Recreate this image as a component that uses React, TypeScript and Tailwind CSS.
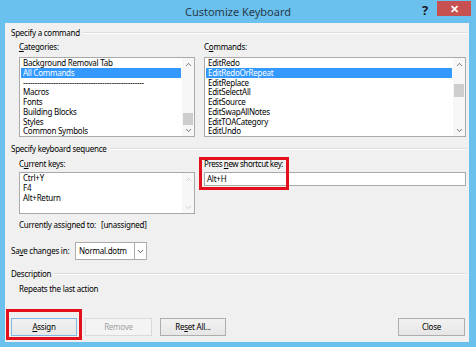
import React from "react";
import { ChevronDown, ChevronUp } from "lucide-react";

const categories = [
  "Background Removal Tab",
  "All Commands",
  "----------------------------------------------------",
  "Macros",
  "Fonts",
  "Building Blocks",
  "Styles",
  "Common Symbols",
];

const commands = [
  "EditRedo",
  "EditRedoOrRepeat",
  "EditReplace",
  "EditSelectAll",
  "EditSource",
  "EditSwapAllNotes",
  "EditTOACategory",
  "EditUndo",
];

function Heading({ children }: { children: React.ReactNode }) {
  return (
    <div className="flex items-center gap-[3px] h-[10px] leading-[10px]">
      <span className="whitespace-nowrap">{children}</span>
      <div className="flex-1 border-t border-[#dcdcdc] border-b-white border-b" />
    </div>
  );
}

function ScrollBar({ thumb, disabled }: { thumb?: string; disabled?: boolean }) {
  const arrow = disabled ? "#c4c4c4" : "#5a5a5a";
  return (
    <div className="w-[12px] flex flex-col items-center bg-[#f7f7f7]">
      <div className="h-[12px] flex items-center justify-center">
        <ChevronUp size={9} strokeWidth={2.2} color={arrow} />
      </div>
      <div className="flex-1 w-full relative">
        {thumb && <div className={"absolute left-[1px] right-[1px] bg-[#cdcdcd] " + thumb} />}
      </div>
      <div className="h-[12px] flex items-center justify-center">
        <ChevronDown size={9} strokeWidth={2.2} color={arrow} />
      </div>
    </div>
  );
}

function ListBox({
  items,
  selected,
  width,
  height,
  thumb,
  disabled,
}: {
  items: string[];
  selected?: number;
  width: string;
  height: string;
  thumb?: string;
  disabled?: boolean;
}) {
  return (
    <div className={"flex border border-[#a9a9a9] bg-white " + width + " " + height}>
      <div className="flex-1 flex flex-col overflow-hidden pl-[1px] pr-[1px]">
        {items.map((it, i) => (
          <div
            key={i}
            className={
              "h-[9.75px] leading-[9.75px] shrink-0 pl-[2px] whitespace-nowrap " +
              (i === selected ? "bg-[#3399ff] text-white" : "")
            }
          >
            {it}
          </div>
        ))}
      </div>
      <ScrollBar thumb={thumb} disabled={disabled} />
    </div>
  );
}

function Button({
  children,
  width,
  primary,
  disabled,
}: {
  children: React.ReactNode;
  width: string;
  primary?: boolean;
  disabled?: boolean;
}) {
  return (
    <div
      className={
        "h-[18px] flex items-center justify-center border " +
        width +
        " " +
        (disabled
          ? "border-[#dadada] bg-[#f4f4f4] text-[#a3a3a3]"
          : primary
          ? "border-[#7fb6e6] bg-gradient-to-b from-[#f2f2f2] to-[#e6e6e6]"
          : "border-[#adadad] bg-gradient-to-b from-[#f2f2f2] to-[#e6e6e6]")
      }
    >
      {children}
    </div>
  );
}

export default function App() {
  return (
    <div className="w-[476px] h-[347px] bg-[#6bc1ee] flex flex-col font-['Noto_Sans',sans-serif] text-[8px] tracking-[-0.25px] text-black overflow-hidden">
      <div className="h-[23px] relative flex items-center justify-center">
        <span className="text-[11px] tracking-normal text-[#26394a] pt-[1px]">Customize Keyboard</span>
        <span className="absolute left-[422px] top-[1px] text-[13px] font-bold text-[#1b1b1b]">?</span>
        <div className="absolute left-[437px] top-[1px] w-[34px] h-[15px] bg-[#c75050] flex items-center justify-center">
          <span className="text-white text-[11px] font-bold leading-none">✕</span>
        </div>
      </div>

      <div className="flex-1 ml-[5px] mr-[7px] mb-[5px] bg-[#f0f0f0] pl-[6px] pr-[3px] pt-[5px] pb-[6px] flex flex-col">
        <Heading>Specify a command</Heading>
        <div className="flex pl-[8px] mt-[4px] gap-[9px]">
          <div className="flex flex-col">
            <div className="h-[10px] leading-[10px]">
              <span className="underline">C</span>ategories:
            </div>
            <div className="mt-[5px]">
              <ListBox
                items={categories}
                selected={1}
                width="w-[176px]"
                height="h-[80px]"
                thumb="top-[43px] h-[12px]"
              />
            </div>
          </div>
          <div className="flex flex-col flex-1">
            <div className="h-[10px] leading-[10px]">
              C<span className="underline">o</span>mmands:
            </div>
            <div className="mt-[5px]">
              <ListBox
                items={commands}
                selected={1}
                width="w-full"
                height="h-[80px]"
                thumb="top-[14px] h-[13px]"
              />
            </div>
          </div>
        </div>

        <div className="mt-[7px]">
          <Heading>Specify keyboard sequence</Heading>
        </div>
        <div className="flex pl-[8px] mt-[5px] gap-[9px]">
          <div className="flex flex-col">
            <div className="h-[10px] leading-[10px]">
              C<span className="underline">u</span>rrent keys:
            </div>
            <div className="mt-[3px]">
              <ListBox
                items={["Ctrl+Y", "F4", "Alt+Return"]}
                width="w-[176px]"
                height="h-[42px]"
                disabled
              />
            </div>
          </div>
          <div className="flex flex-col flex-1 relative">
            <div className="h-[10px] leading-[10px] whitespace-nowrap tracking-[-0.4px]">
              Press <span className="underline">n</span>ew shortcut key:
            </div>
            <div className="mt-[3px] h-[14px] border border-[#a9a9a9] bg-white pl-[2px] leading-[12px]">
              Alt+H
            </div>
            <div className="absolute left-[-5px] top-[-2px] w-[90px] h-[33px] border-[3px] border-[#e3101b]" />
          </div>
        </div>

        <div className="pl-[8px] mt-[6px] h-[10px] leading-[10px] flex whitespace-nowrap">
          <span className="w-[82px] shrink-0">Currently assigned to:</span>
          <span>[unassigned]</span>
        </div>

        <div className="mt-[12px] flex items-center whitespace-nowrap">
          <span className="w-[64px] shrink-0">
            Sa<span className="underline">v</span>e changes in:
          </span>
          <div className="w-[72px] shrink-0 h-[18px] border border-[#acacac] bg-white flex">
            <div className="flex-1 pl-[3px] flex items-center">Normal.dotm</div>
            <div className="w-[12px] border-l border-[#acacac] flex items-center justify-center">
              <ChevronDown size={9} strokeWidth={2.2} color="#333" />
            </div>
          </div>
        </div>

        <div className="mt-[9px]">
          <Heading>Description</Heading>
        </div>
        <div className="pl-[8px] mt-[5px] h-[10px] leading-[10px]">Repeats the last action</div>

        <div className="mt-auto flex items-center">
          <div className="relative">
            <Button width="w-[66px]" primary>
              <span className="underline">A</span>ssign
            </Button>
            <div className="absolute left-[-5px] top-[-9px] w-[76px] h-[31px] border-[3px] border-[#e3101b]" />
          </div>
          <div className="ml-[8px]">
            <Button width="w-[67px]" disabled>
              Remove
            </Button>
          </div>
          <div className="ml-[8px]">
            <Button width="w-[66px]">
              Re<span className="underline">s</span>et All...
            </Button>
          </div>
          <div className="ml-auto mr-[1px]">
            <Button width="w-[67px]">Close</Button>
          </div>
        </div>
      </div>
    </div>
  );
}
